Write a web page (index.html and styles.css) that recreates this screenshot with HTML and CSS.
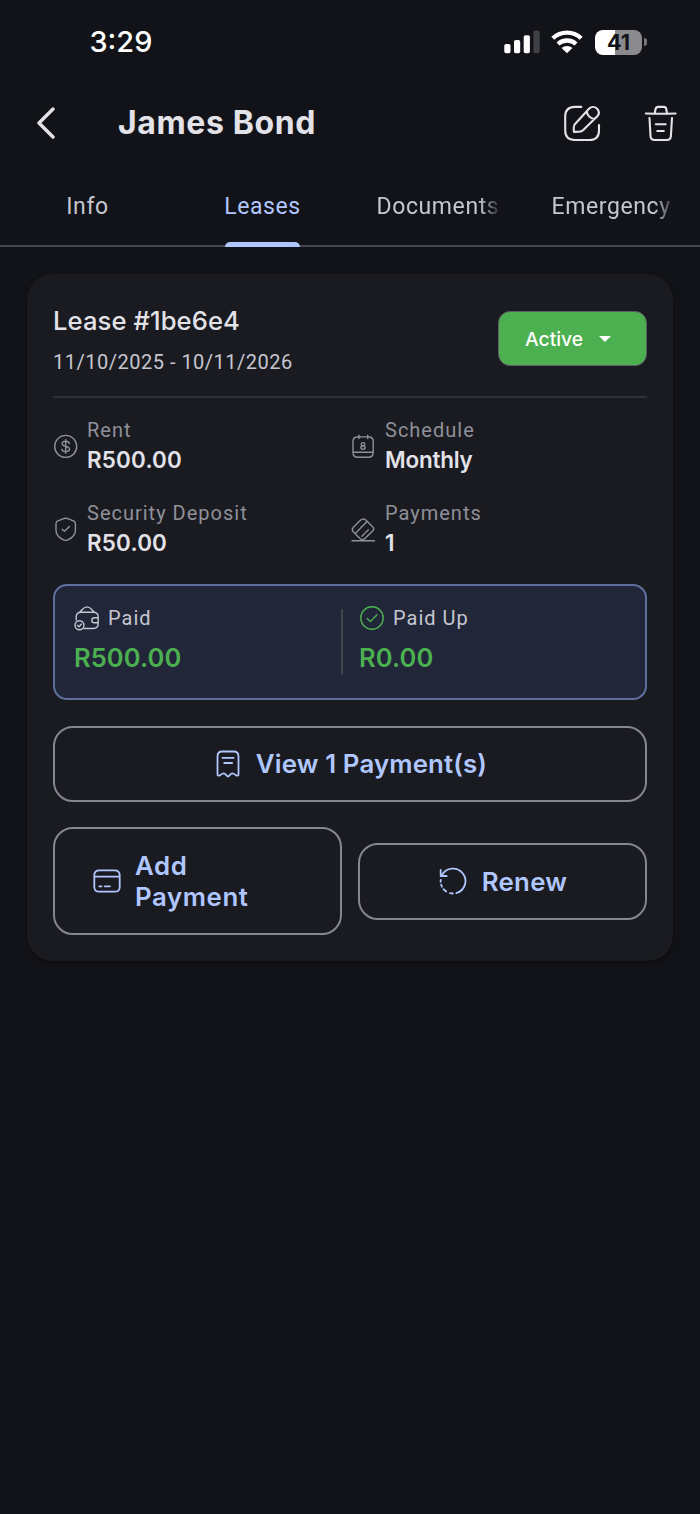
FILE: index.html
```html
<!DOCTYPE html>
<html lang="en">
<head>
<meta charset="utf-8">
<title>James Bond – Leases</title>
<link rel="stylesheet" href="styles.css">
</head>
<body>
<div class="screen">
  <div class="status">
    <span class="time">3:29</span>
    <div class="status-icons">
      <svg class="signal" width="37" height="24" viewBox="0 0 37 24"><g fill="#fff"><rect x="0.3" y="14" width="6.2" height="9.3" rx="1.8"/><rect x="10" y="10" width="6.2" height="13.3" rx="1.8"/><rect x="19.7" y="5.3" width="6.2" height="18" rx="1.8"/></g><rect x="29.5" y="0.5" width="6.2" height="22.8" rx="1.8" fill="#404146"/></svg>
      <svg class="wifi" width="32" height="24" viewBox="0 0 32 24"><g fill="none" stroke="#fff" stroke-width="4.3"><path d="M1.8 8.2C9.8 .7 22.2 .7 30.2 8.2"/><path d="M7 14C12 9.3 20 9.3 25 14"/></g><path d="M16 23.3L10.6 18C13.5 15.2 18.5 15.2 21.4 18Z" fill="#fff"/></svg>
      <div class="battery-wrap"><div class="battery">41</div><div class="nub"></div></div>
    </div>
  </div>

  <header class="header">
    <svg class="back" width="20" height="34" viewBox="0 0 20 34"><path d="M18 3L4 17L18 31" fill="none" stroke="#e3e2e9" stroke-width="3.4" stroke-linecap="round" stroke-linejoin="round"/></svg>
    <h1 class="title">James Bond</h1>
    <div class="actions">
      <svg class="action" width="40" height="40" viewBox="0 0 40 40"><path d="M19.3 3.9H13C6.3 3.9 3.2 7 3.2 13.5V27.3C3.2 34 6.3 37 12.7 37H27.3C33.7 37 37 34 37 27.5V22M12.6 21.5L27 5.7C29.2 3.5 32.6 3.4 34.9 5.5C37.3 7.9 37.3 11 35.3 13.2L21 27.3C19.8 28.5 18.8 28.7 17 28.8L12 28.9C11.6 26 11.6 23 12.6 21.5ZM24.7 8.4C25.5 12.4 28.2 15.3 32.2 16"/></svg>
      <svg class="action" width="40" height="40" viewBox="0 0 40 40"><path d="M5.8 10.5L14.7 10.8H27L35.6 10.5M14.7 10.5L15.5 6.2C15.9 4.6 16.6 3.9 18.2 3.9H23.7C25.3 3.9 26 4.6 26.3 6.2L27 10.5M9.5 15L10.5 33C10.6 36 11.8 37 14.7 37H26.7C29.6 37 30.8 36 30.9 33L32 15M15.8 21.3H25.7M17.3 28H23.8"/></svg>
    </div>
  </header>

  <nav class="tabs">
    <div class="tab"><span class="label">Info</span></div>
    <div class="tab tab-active"><span class="label">Leases</span></div>
    <div class="tab"><span class="label label-fade">Documents</span></div>
    <div class="tab"><span class="label label-fade">Emergency</span></div>
  </nav>

  <main class="card">
    <div class="card-head">
      <div>
        <h2 class="lease">Lease #1be6e4</h2>
        <div class="dates">11/10/2025 - 10/11/2026</div>
      </div>
      <div class="badge">Active<i class="caret"></i></div>
    </div>

    <div class="facts">
      <div class="fact">
        <svg class="ico" width="26" height="26" viewBox="0 0 26 26"><circle cx="12.7" cy="13.4" r="11"/><path d="M12.7 6.6V20.2M16.4 10.6C16.2 9.1 14.8 8.3 12.7 8.3S9.1 9.2 9.1 10.8C9.1 12.4 10.5 12.9 12.7 13.4S16.5 14.4 16.5 16.1C16.5 17.7 15 18.6 12.7 18.6S9 17.7 8.8 16.1"/></svg>
        <div><div class="k">Rent</div><div class="v">R500.00</div></div>
      </div>
      <div class="fact">
        <svg class="ico" width="26" height="26" viewBox="0 0 26 26"><path d="M10.5 3.9H16.5M6.8 4C4.2 4.3 3 5.8 3 8.5V19.5C3 23 4.4 24.3 7.9 24.3H18.3C21.8 24.3 23.2 23 23.2 19.5V8.5C23.2 5.8 22 4.3 19.6 4M9 2.3V5.5M17.7 2.3V5.5M3.2 19.2H23M6.8 4H10.5M16.5 3.9H19.6"/><ellipse cx="13" cy="11.2" rx="1.8" ry="1.6"/><ellipse cx="13" cy="14.6" rx="2.1" ry="1.8"/></svg>
        <div class="fact-right"><div class="k">Schedule</div><div class="v v-tight">Monthly</div></div>
      </div>
      <div class="fact">
        <svg class="ico" width="26" height="26" viewBox="0 0 26 26"><path d="M12.7 2.3C14.5 2.3 18 4.1 20.2 4.7C21.9 5.2 22.3 6 22.4 7.9V14.4C22.4 19.7 17.5 22.6 14.9 23.9C13.1 24.7 12.3 24.7 10.5 23.9C7.9 22.6 3 19.7 3 14.4V7.9C3.1 6 3.5 5.2 5.2 4.7C7.4 4.1 10.9 2.3 12.7 2.3ZM9.2 13.4L11.5 15.2L16.4 10.6"/></svg>
        <div><div class="k">Security Deposit</div><div class="v">R50.00</div></div>
      </div>
      <div class="fact">
        <svg class="ico" width="26" height="26" viewBox="0 0 26 26"><path d="M10.2 4.4L3.4 11.2C1.7 13 1.7 14.1 3.4 15.9L10 22.6C11.7 24.3 13.1 24.3 14.8 22.6L22.4 15.3C24.2 13.5 24.2 12.4 22.4 10.6L15.7 4.1C13.8 2.3 12.2 2.4 10.2 4.4ZM5.3 17.5L17 5.6M12 20.2L14.5 17.6M15.6 16.5L18.4 13.7M2 24.8H24.5"/></svg>
        <div class="fact-right"><div class="k">Payments</div><div class="v">1</div></div>
      </div>
    </div>

    <div class="summary">
      <div class="sum">
        <div class="sum-k"><svg class="ico ico-light" width="26" height="26" viewBox="0 0 26 26"><path d="M2.2 15V12C2.2 8.6 3.8 7.2 7.2 7.2H19.3C22.7 7.2 24.2 8.6 24.2 12V18.5C24.2 22 22.7 23.5 19.3 23.5H10M5.8 7C7.8 5.5 9.2 1.9 13 1.9S18.2 5.5 20.2 7M24.2 12.7H20.5C18.7 12.7 17.8 13.7 17.8 15.2S18.7 17.8 20.5 17.8H24.2"/><circle cx="5.5" cy="20.2" r="4.5"/><path d="M3.5 20.3L5 21.7L7.5 19"/></svg>Paid</div>
        <div class="sum-v">R500.00</div>
      </div>
      <div class="sum sum-right">
        <div class="sum-k"><svg class="ico ico-green" width="26" height="26" viewBox="0 0 26 26"><circle cx="13" cy="13" r="11.2"/><path d="M8.2 13.4L11.4 16.6L18 9.8"/></svg>Paid Up</div>
        <div class="sum-v">R0.00</div>
      </div>
    </div>

    <button class="btn btn-view"><svg class="ico ico-blue" width="30" height="30" viewBox="0 0 30 30"><path d="M4.5 25.8V7.5C4.5 3.9 5.9 2.5 9.3 2.5H20.7C24.1 2.5 25.5 3.9 25.5 7.5V25.8C25.5 27 24.2 27 22.5 25.9C20.7 24.5 19.8 23.9 18.6 24.6C17 25.6 16 27.5 15 27.5S13 25.6 11.4 24.6C10.2 23.9 9.3 24.5 7.5 25.9C5.8 27 4.5 27 4.5 25.8ZM9.5 8.9H20.6M11.2 14H19.1"/></svg><span>View 1 Payment(s)</span></button>
    <div class="btn-row">
      <button class="btn btn-add"><svg class="ico ico-blue" width="30" height="30" viewBox="0 0 30 30"><path d="M7.5 4.4H22.5C26.3 4.4 27.7 5.7 27.7 9.2V20.9C27.7 24.4 26.3 25.7 22.5 25.7H7.5C3.7 25.7 2.3 24.4 2.3 20.9V9.2C2.3 5.7 3.7 4.4 7.5 4.4ZM2.3 10.7H27.7M7.2 20.3H9.6M12.8 20.3H18"/></svg><span>Add<br>Payment</span></button>
      <button class="btn btn-renew"><svg class="ico ico-blue" width="30" height="30" viewBox="0 0 30 30"><path d="M2.7 3.8V10H8.7M3.9 9.2A12.5 12.5 0 1 1 18.3 27.1M14.8 27.5L12 27.1M8.2 25.5L5.5 23.1M3.9 20.7L3.1 18.7M2.6 15.8L2.8 13.9"/></svg><span>Renew</span></button>
    </div>
  </main>
</div>
</body>
</html>
```
FILE: styles.css
```css
* { box-sizing: border-box; }
body { margin: 0; background: #121318; font-family: Roboto, "Noto Sans", sans-serif; color: #e3e2e9; }
.screen { width: 700px; height: 1514px; overflow: hidden; }
h1, h2 { margin: 0; }

.status { height: 84px; display: flex; justify-content: space-between; align-items: center; padding: 0 53px 0 89.5px; }
.time { font: 500 28.9px/34px Inter, sans-serif; color: #fff; }
.status-icons { display: flex; align-items: center; height: 26px; }
.wifi { margin-left: 11px; }
.battery-wrap { display: flex; align-items: center; margin: 0 0 0 12px; }
.battery { width: 47px; height: 25px; border-radius: 8px; background: linear-gradient(90deg, #fff 20px, #8b8b8e 20px); color: #121318; font: 700 21.5px/25px Inter, sans-serif; text-align: center; }
.nub { width: 3px; height: 8px; margin-left: 2px; border-radius: 0 4px 4px 0; background: #77787c; }
.signal { margin-right: -1px; }

.header { height: 78px; display: flex; align-items: center; padding: 0 20px 0 35px; }
.title { flex: 1; margin-left: 63px; font: 700 32px/40px Inter, sans-serif; letter-spacing: .6px; }
.actions { display: flex; gap: 38px; }
.action { fill: none; stroke: #e3e2e9; stroke-width: 2.1; stroke-linecap: round; stroke-linejoin: round; }

.tabs { height: 85px; display: grid; grid-template-columns: repeat(4, 175px); border-bottom: 2px solid #44464f; }
.tab { position: relative; display: flex; justify-content: center; padding-top: 29px; color: #c5c6d0; font-size: 23px; line-height: 31px; letter-spacing: .6px; }
.tab-active { color: #b0c6ff; }
.tab-active::after { content: ""; position: absolute; left: 50px; bottom: -2px; width: 75px; height: 5px; border-radius: 5px 5px 0 0; background: #b0c6ff; }
.label-fade { width: 122px; height: 31px; overflow: hidden; white-space: nowrap; -webkit-mask-image: linear-gradient(90deg, #000 84%, transparent 103%); mask-image: linear-gradient(90deg, #000 84%, transparent 103%); }

.card { margin: 27px 27px 0; height: 687px; padding: 26px; border-radius: 26px; background: #1a1b20; box-shadow: 0 2px 5px rgba(0, 0, 0, .35); }
.card-head { display: flex; justify-content: space-between; height: 98px; border-bottom: 2px solid #303137; }
.lease { margin-top: 4px; font: 500 25.6px/34px Inter, sans-serif; letter-spacing: .1px; }
.dates { margin-top: 11px; font-size: 20px; line-height: 26px; color: #c5c6d0; letter-spacing: .5px; }
.badge { width: 149px; height: 55px; margin: 11px 0 0 0; display: flex; align-items: center; padding: 1px 0 0 26px; border: 1px solid #5b5e66; border-radius: 12px; background: #4caf50; color: #fff; font: 500 19.3px/26px Inter, sans-serif; }
.caret { margin-left: 16px; border: 6px solid transparent; border-top: 6.5px solid #fff; border-bottom: 0; }

.facts { display: grid; grid-template-columns: 297px 297px; row-gap: 23px; margin-top: 18px; }
.fact { display: flex; align-items: center; gap: 8px; height: 60px; }
.fact-right { padding-left: 1px; }
.ico { flex: none; fill: none; stroke: #8f9099; stroke-width: 1.4; stroke-linecap: round; stroke-linejoin: round; }
.ico-light { stroke: #c5c6d0; }
.ico-green { stroke: #4caf50; }
.ico-blue { stroke: #b0c6ff; stroke-width: 1.8; }
.k { font-size: 20px; line-height: 28px; color: #8f9099; letter-spacing: 1px; }
.v { font: 600 22.4px/32px Inter, sans-serif; letter-spacing: .2px; }
.v-tight { letter-spacing: -.2px; }

.summary { display: grid; grid-template-columns: 288px 1fr; height: 116px; margin-top: 24.5px; border: 2px solid #5f70a0; border-radius: 14px; background: #212639; padding: 19px 0; }
.sum { padding: 0 0 0 19px; }
.sum-right { position: relative; padding-left: 16px; }
.sum-right::before { content: ""; position: absolute; left: -2px; top: 4px; width: 2px; height: 66px; background: #44464f; }
.sum-k { display: flex; align-items: center; height: 26px; gap: 8px; font-size: 20px; color: #c5c6d0; letter-spacing: 1px; }
.sum-v { margin-top: 10.5px; font: 600 25.5px/34px Inter, sans-serif; letter-spacing: .1px; color: #4caf50; }

.btn { display: flex; align-items: center; justify-content: center; gap: 14px; padding: 0; border: 2px solid #85868e; border-radius: 20px; background: none; color: #b0c6ff; font: 600 25.8px/31px Inter, sans-serif; letter-spacing: .3px; text-align: left; }
.btn-view { width: 100%; height: 76px; margin-top: 26px; gap: 13px; letter-spacing: .15px; }
.btn-row { display: grid; grid-template-columns: 289px 289px; justify-content: space-between; align-items: center; margin-top: 25.5px; }
.btn-add { height: 108px; justify-content: flex-start; padding-left: 37px; gap: 13px; letter-spacing: .6px; }
.btn-renew { height: 77px; }
```
